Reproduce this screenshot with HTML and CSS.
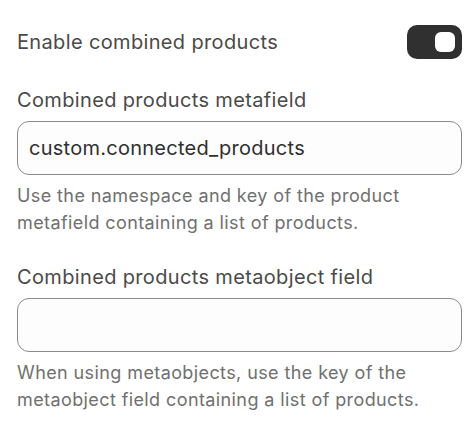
FILE: index.html
```html
<!DOCTYPE html>
<html lang="en">
<head>
<meta charset="utf-8">
<title>Combined products settings</title>
<link rel="stylesheet" href="styles.css">
</head>
<body>
<div class="panel">
  <div class="toggle-row">
    <span class="label">Enable combined products</span>
    <span class="switch" role="switch" aria-checked="true"><span class="knob"></span></span>
  </div>
  <div class="field field-first">
    <label class="label" for="mf">Combined products metafield</label>
    <input class="input" id="mf" type="text" value="custom.connected_products">
    <p class="help">Use the namespace and key of the product metafield containing a list of products.</p>
  </div>
  <div class="field">
    <label class="label" for="mo">Combined products metaobject field</label>
    <input class="input" id="mo" type="text" value="">
    <p class="help">When using metaobjects, use the key of the metaobject field containing a list of products.</p>
  </div>
</div>
</body>
</html>
```

FILE: styles.css
```css
html, body {
  margin: 0;
  padding: 0;
  background: #ffffff;
}

body {
  font-family: Inter, "Noto Sans", "Liberation Sans", sans-serif;
  color: #4a4a4a;
}

.panel {
  padding: 25px 9px 0 17px;
  display: flex;
  flex-direction: column;
}

.toggle-row {
  display: flex;
  align-items: center;
  justify-content: space-between;
  height: 34px;
}

.label {
  display: block;
  font-size: 20px;
  line-height: 24px;
  letter-spacing: 0.35px;
  color: #4a4a4a;
}

.switch {
  width: 55px;
  height: 34px;
  box-sizing: border-box;
  border-radius: 10px;
  background: #303030;
  display: flex;
  align-items: center;
  justify-content: flex-end;
  padding-right: 7px;
}

.knob {
  width: 20px;
  height: 20px;
  border-radius: 6px;
  background: #ffffff;
}

.field {
  display: flex;
  flex-direction: column;
  margin-top: 29px;
}

.field-first {
  margin-top: 29px;
}

.input {
  margin: 9px 0 0 0;
  box-sizing: border-box;
  height: 54px;
  width: 100%;
  border: 1px solid #8a8a8a;
  border-radius: 12px;
  background: #fdfdfd;
  padding: 0 11px;
  font-family: inherit;
  font-size: 20px;
  letter-spacing: 0.26px;
  color: #303030;
  outline: none;
}

.help {
  margin: 7px 0 0 0;
  font-size: 18px;
  line-height: 27px;
  letter-spacing: 0.4px;
  color: #707070;
}
```
